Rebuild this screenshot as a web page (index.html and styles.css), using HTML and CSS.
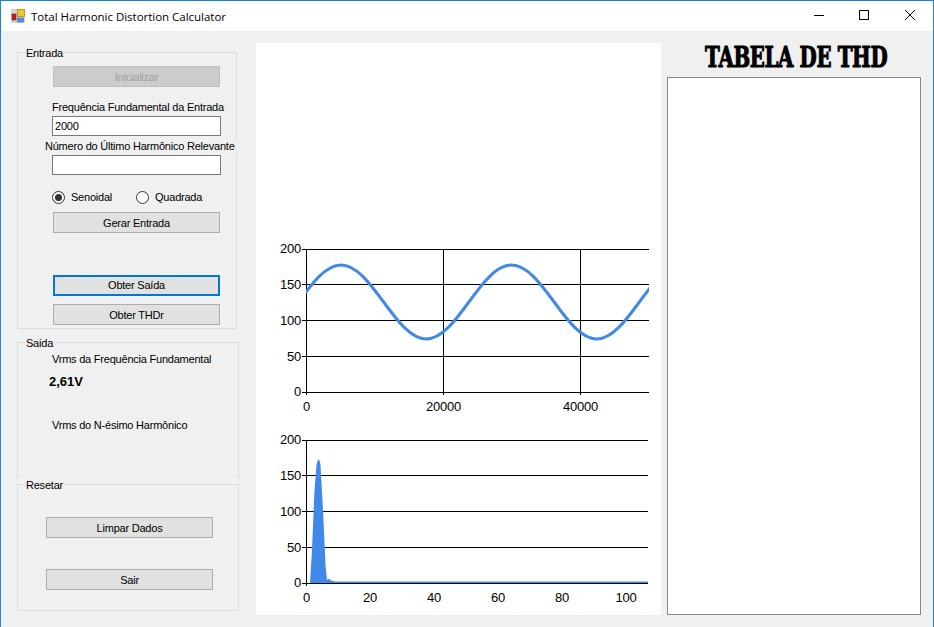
FILE: index.html
```html
<!DOCTYPE html>
<html lang="pt">
<head>
<meta charset="utf-8">
<title>Total Harmonic Distortion Calculator</title>
<link rel="stylesheet" href="styles.css">
</head>
<body>
<div class="window">
  <header class="titlebar">
    <svg class="app-icon" width="14" height="14" viewBox="0 0 14 14">
      <rect x="0" y="0" width="14" height="14" fill="#d4d4d4"/>
      <rect x="1" y="5" width="4" height="6" fill="#c01f1f" stroke="#7a1a1a" stroke-width="0.6"/>
      <rect x="6.5" y="0.5" width="7" height="7" fill="#f3c531" stroke="#b58b18" stroke-width="0.8"/>
      <rect x="6.5" y="9" width="6" height="4" fill="#5b8fdc" stroke="#3d6cb5" stroke-width="0.6"/>
    </svg>
    <span class="title-text">Total Harmonic Distortion Calculator</span>
    <div class="caption">
      <div class="caption-btn"><svg width="12" height="12" viewBox="0 0 12 12"><path d="M2 5.5H12" stroke="#000" fill="none"/></svg></div>
      <div class="caption-btn"><svg width="12" height="12" viewBox="0 0 12 12"><rect x="1.5" y="0.5" width="9" height="9" stroke="#000" fill="none"/></svg></div>
      <div class="caption-btn"><svg width="12" height="12" viewBox="0 0 12 12"><path d="M1 0L11 10M11 0L1 10" stroke="#000" fill="none"/></svg></div>
    </div>
  </header>
  <main class="client">
    <aside class="left">
      <section class="group group-entrada">
        <div class="group-title">Entrada</div>
        <button class="btn btn-disabled btn-init" type="button">Inicializar</button>
        <label class="lbl lbl-freq">Frequência Fundamental da Entrada</label>
        <div class="input input-freq">2000</div>
        <label class="lbl lbl-num">Número do Último Harmônico Relevante</label>
        <div class="input input-num"></div>
        <div class="radios">
          <span class="radio radio-on"></span><span class="radio-text radio-text-1">Senoidal</span>
          <span class="radio"></span><span class="radio-text">Quadrada</span>
        </div>
        <button class="btn btn-gerar" type="button">Gerar Entrada</button>
        <button class="btn btn-focus btn-saida" type="button">Obter Saída</button>
        <button class="btn btn-thdr" type="button">Obter THDr</button>
      </section>
      <section class="group group-saida">
        <div class="group-title">Saida</div>
        <div class="lbl lbl-vrms">Vrms da Frequência Fundamental</div>
        <div class="value">2,61V</div>
        <div class="lbl lbl-nth">Vrms do N-ésimo Harmônico</div>
      </section>
      <section class="group group-resetar">
        <div class="group-title">Resetar</div>
        <button class="btn btn-limpar" type="button">Limpar Dados</button>
        <button class="btn btn-sair" type="button">Sair</button>
      </section>
    </aside>
    <section class="charts">
      <svg class="chart chart-top" width="405" height="190" viewBox="256 240 405 190">
        <defs><clipPath id="plot"><rect x="306" y="245" width="343" height="150"/></clipPath></defs>
        <path class="grid" d="M302 249.5H649M302 284.5H649M302 320.5H649M302 356.5H649M302 392.5H649M306.5 249V395M443.5 249V395M580.5 249V395"/>
        <path class="sine" clip-path="url(#plot)" d="M255.75 339C286.8 339 309.95 265 341 265S395.2 339 426.25 339S480.45 265 511.5 265S565.7 339 596.75 339S650.95 265 682 265"/>
        <text class="tick tick-y" x="301" y="253">200</text>
        <text class="tick tick-y" x="301" y="289">150</text>
        <text class="tick tick-y" x="301" y="325">100</text>
        <text class="tick tick-y" x="301" y="361">50</text>
        <text class="tick tick-y" x="301" y="396">0</text>
        <text class="tick tick-x" x="306.5" y="411">0</text>
        <text class="tick tick-x" x="443.5" y="411">20000</text>
        <text class="tick tick-x" x="580.5" y="411">40000</text>
      </svg>
      <svg class="chart chart-bottom" width="405" height="185" viewBox="256 430 405 185">
        <path class="grid" d="M302 440.5H648M302 475.5H648M302 511.5H648M302 547.5H648M302 583.5H648M306.5 440V586"/>
        <path class="area" d="M310 583L312 550L314.5 490L316.5 465Q318.7 454 320.5 465L323 510L325.5 565L327 580L328.5 578.5L331 580.5L335 581.5L648 581.5V583Z"/>
        <text class="tick tick-y" x="301" y="444">200</text>
        <text class="tick tick-y" x="301" y="480">150</text>
        <text class="tick tick-y" x="301" y="516">100</text>
        <text class="tick tick-y" x="301" y="552">50</text>
        <text class="tick tick-y" x="301" y="587">0</text>
        <text class="tick tick-x" x="306.5" y="602">0</text>
        <text class="tick tick-x" x="370" y="602">20</text>
        <text class="tick tick-x" x="434" y="602">40</text>
        <text class="tick tick-x" x="498" y="602">60</text>
        <text class="tick tick-x" x="562" y="602">80</text>
        <text class="tick tick-x" x="626" y="602">100</text>
      </svg>
    </section>
    <section class="right">
      <h1 class="table-title"><span class="table-title-text">TABELA DE THD</span></h1>
      <div class="listbox"></div>
    </section>
  </main>
</div>
</body>
</html>
```
FILE: styles.css
```css
* { box-sizing: border-box; }
html, body { margin: 0; padding: 0; }
body { width: 934px; height: 627px; overflow: hidden; background: #f0f0f0; font-family: "Liberation Sans", Arial, sans-serif; font-size: 11px; letter-spacing: -0.22px; color: #000; }
.window { width: 934px; height: 627px; display: flex; flex-direction: column; border-top: 1px solid #1c83d4; border-left: 1px solid #1c83d4; border-right: 1px solid #1c83d4; }

.titlebar { height: 30px; flex: none; background: #fff; display: flex; align-items: center; padding-left: 10px; }
.app-icon { flex: none; }
.title-text { margin-left: 6px; font-family: "Open Sans", sans-serif; font-size: 11.5px; letter-spacing: -0.02px; color: #000; }
.caption { margin-left: auto; display: flex; }
.caption-btn { width: 46px; height: 30px; display: flex; align-items: center; justify-content: center; }

.client { flex: 1; display: flex; padding-left: 16px; }
.left { width: 222px; flex: none; padding-top: 21px; display: flex; flex-direction: column; }
.charts { width: 405px; height: 572px; flex: none; margin: 12px 6px 0 17px; background: #fff; padding-top: 197px; display: flex; flex-direction: column; }
.right { width: 254px; flex: none; display: flex; flex-direction: column; }

.group { border: 1px solid #dcdcdc; display: flex; flex-direction: column; align-items: flex-start; }
.group-title { margin: -7px 0 0 8px; padding: 0 1px 0 0; background: #f0f0f0; line-height: 14px; height: 14px; }
.group-entrada { width: 220px; height: 277px; }
.group-saida { width: 222px; height: 136px; margin-top: 13px; border-bottom: 0; }
.group-resetar { width: 222px; height: 127px; margin-top: 6px; }

.btn { display: block; width: 167px; height: 21px; padding: 1px 0 0; border: 1px solid #adadad; background: #e1e1e1; font: inherit; letter-spacing: inherit; color: #000; line-height: 18px; text-align: center; }
.btn-disabled { background: #cccccc; border-color: #bfbfbf; color: #a0a0a0; }
.btn-focus { border: 2px solid #0078d7; padding: 0; line-height: 17px; }
.btn-init { margin: 6px 0 0 35px; }
.btn-gerar { margin: 8px 0 0 35px; }
.btn-saida { margin: 42px 0 0 35px; height: 21px; }
.btn-thdr { margin: 8px 0 0 35px; }
.btn-limpar { margin: 25px 0 0 28px; }
.btn-sair { margin: 31px 0 0 28px; }

.lbl { display: block; line-height: 14px; height: 14px; white-space: nowrap; }
.lbl-freq { margin: 13px 0 0 34px; }
.lbl-num { margin: 3px 0 0 27px; background: #f0f0f0; padding-right: 4px; }
.lbl-vrms { margin: 2px 0 0 34px; }
.lbl-nth { margin: 28px 0 0 34px; }
.value { margin: 8px 0 0 31px; font-size: 13px; letter-spacing: 0; font-weight: 700; line-height: 16px; }

.input { width: 169px; height: 20px; background: #fff; border: 1px solid #7a7a7a; padding-left: 2px; line-height: 18px; }
.input-freq { margin: 2px 0 0 34px; }
.input-num { margin: 2px 0 0 34px; }

.radios { display: flex; align-items: center; height: 14px; margin: 15px 0 0 34px; }
.radio { width: 13px; height: 13px; border-radius: 50%; border: 1px solid #333; background: #fff; flex: none; display: flex; align-items: center; justify-content: center; }
.radio-on::after { content: ""; width: 7px; height: 7px; border-radius: 50%; background: #333; }
.radio-text { margin-left: 6px; line-height: 14px; }
.radio-text-1 { width: 65px; }

.chart { display: block; flex: none; }
.grid { stroke: #000; stroke-width: 1; fill: none; }
.sine { stroke: #4189e9; stroke-width: 3; fill: none; }
.area { fill: #4189e9; stroke: none; }
.tick { font-family: "Liberation Sans", Arial, sans-serif; font-size: 13px; letter-spacing: -0.2px; fill: #000; }
.tick-y { text-anchor: end; }
.tick-x { text-anchor: middle; }

.table-title { height: 46px; margin: 0; padding: 6px 0 0 5px; flex: none; display: flex; align-items: center; justify-content: center; font-family: "DejaVu Serif", serif; font-weight: 700; font-size: 22px; letter-spacing: -0.4px; color: #000; white-space: nowrap; }
.table-title-text { display: inline-block; transform: scale(0.9, 1.25); -webkit-text-stroke: 0.9px #000; }
.listbox { height: 538px; background: #fff; border: 1px solid #828790; }
```
